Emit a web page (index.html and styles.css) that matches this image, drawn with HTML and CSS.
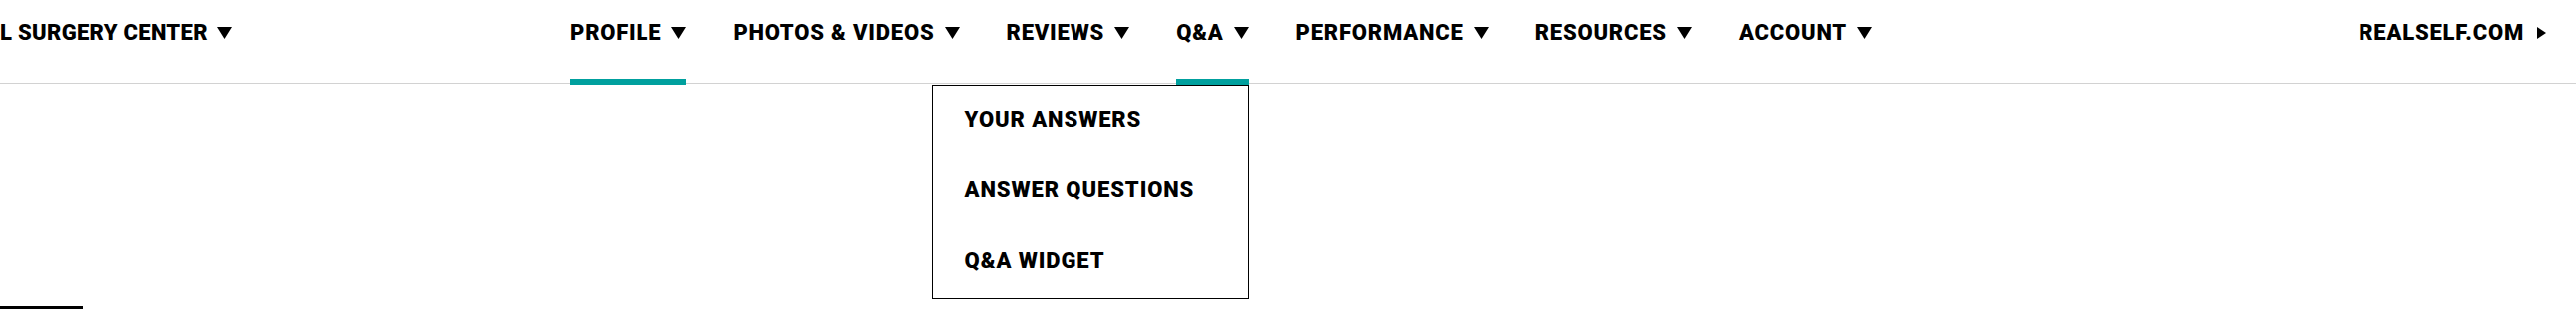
FILE: index.html
```html
<!DOCTYPE html>
<html lang="en">
<head>
<meta charset="utf-8">
<title>RealSelf Provider Nav</title>
<link rel="stylesheet" href="styles.css">
</head>
<body>
<header class="topbar">
  <div class="brand">
    <div class="nav-item brand-item"><span class="label">L SURGERY CENTER</span><svg class="caret" viewBox="0 0 15 12"><polygon points="0,0 15,0 7.5,12"/></svg></div>
  </div>
  <nav class="mainnav">
    <div class="nav-item active"><span class="label">PROFILE</span><svg class="caret" viewBox="0 0 15 12"><polygon points="0,0 15,0 7.5,12"/></svg></div>
    <div class="nav-item"><span class="label">PHOTOS &amp; VIDEOS</span><svg class="caret" viewBox="0 0 15 12"><polygon points="0,0 15,0 7.5,12"/></svg></div>
    <div class="nav-item"><span class="label">REVIEWS</span><svg class="caret" viewBox="0 0 15 12"><polygon points="0,0 15,0 7.5,12"/></svg></div>
    <div class="nav-item active open"><span class="label">Q&amp;A</span><svg class="caret" viewBox="0 0 15 12"><polygon points="0,0 15,0 7.5,12"/></svg>
      <ul class="dropdown">
        <li>YOUR ANSWERS</li>
        <li>ANSWER QUESTIONS</li>
        <li>Q&amp;A WIDGET</li>
      </ul>
    </div>
    <div class="nav-item"><span class="label">PERFORMANCE</span><svg class="caret" viewBox="0 0 15 12"><polygon points="0,0 15,0 7.5,12"/></svg></div>
    <div class="nav-item"><span class="label">RESOURCES</span><svg class="caret" viewBox="0 0 15 12"><polygon points="0,0 15,0 7.5,12"/></svg></div>
    <div class="nav-item"><span class="label">ACCOUNT</span><svg class="caret" viewBox="0 0 15 12"><polygon points="0,0 15,0 7.5,12"/></svg></div>
  </nav>
  <a class="nav-item external" href="#"><span class="label">REALSELF.COM</span><svg class="caret-right" viewBox="0 0 9 12"><polygon points="0,0 9,6 0,12"/></svg></a>
</header>
<main class="content">
  <div class="stub"></div>
</main>
</body>
</html>
```
FILE: styles.css
```css
* { box-sizing: border-box; }

body {
  margin: 0;
  background: #fff;
  color: #000;
  font-family: Roboto, "Liberation Sans", sans-serif;
  overflow: hidden;
}

.topbar {
  display: flex;
  height: 84px;
  border-bottom: 1px solid #d2d2d2;
}

.brand {
  flex: 0 0 571px;
  display: flex;
}

.mainnav {
  display: flex;
  gap: 47px;
}

.nav-item {
  position: relative;
  display: flex;
  align-items: flex-start;
  gap: 10px;
  padding-top: 20px;
  font-size: 22px;
  font-weight: 900;
  line-height: 26px;
  letter-spacing: 0.8px;
  color: #000;
  text-decoration: none;
  white-space: nowrap;
}

.brand-item {
  letter-spacing: 0.3px;
}

.caret {
  width: 15px;
  height: 12px;
  margin-top: 7px;
  fill: #000;
}

.caret-right {
  width: 9px;
  height: 12px;
  margin-top: 7px;
  fill: #000;
}

.nav-item.active::after {
  content: "";
  position: absolute;
  left: 0;
  right: 0;
  bottom: -2px;
  height: 6px;
  background: #00a09e;
}

.external {
  margin-left: auto;
  margin-right: 30px;
  gap: 13px;
}

.dropdown {
  position: absolute;
  top: 85px;
  right: 0;
  width: 318px;
  margin: 0;
  padding: 0;
  list-style: none;
  background: #fff;
  border: 1px solid #000;
  z-index: 2;
}

.dropdown li {
  padding: 21px 32px 24px;
  font-size: 22px;
  font-weight: 900;
  line-height: 26px;
  letter-spacing: 0.9px;
}

.content {
  padding-top: 223px;
}

.stub {
  width: 83px;
  height: 4px;
  background: #000;
}
```
